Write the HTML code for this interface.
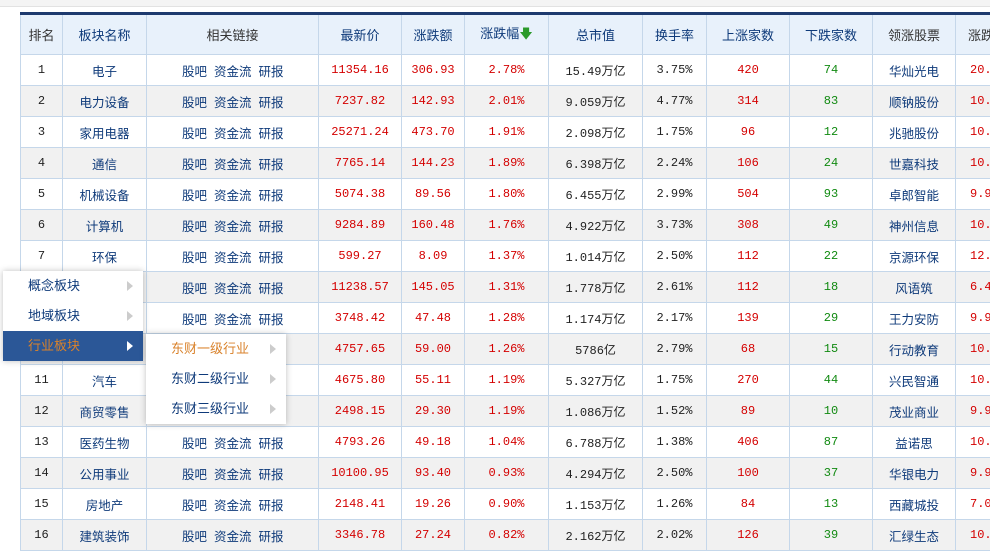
<!DOCTYPE html>
<html><head><meta charset="utf-8">
<style>
body{margin:0;width:990px;height:550px;overflow:hidden;background:#fff;font-family:"Liberation Sans","Noto Sans CJK SC",sans-serif;position:relative}
.top{position:absolute;left:0;top:0;width:990px;height:6px;background:#f4f4f4;border-bottom:1px solid #e2e2e2}
table{position:absolute;left:20px;top:12px;border-collapse:collapse;table-layout:fixed;width:1060px;border-top:3px solid #1d3a6e}
td,th{border:1px solid #c5d7ea;text-align:center;font-size:12.5px;padding:0;height:30px;white-space:nowrap;overflow:hidden}
th{height:39px;background:#e8f1fb;color:#0e3a7a;font-weight:normal;font-size:13px}
th.k{color:#333}
tr:nth-child(odd) td{background:#f1f1f1}
.n{font-family:"Liberation Mono","Noto Sans CJK SC",monospace;font-size:12px}
.r{color:#d40000}.g{color:#118a11}.b{color:#0e3a7a}.d{color:#222}
.lk{color:#0e3a7a;text-align:left;padding-left:35px}
.lk span{margin-right:7px}
.menu{position:absolute;background:#fff;box-shadow:0 0 6px rgba(0,0,0,.25);font-size:13px;color:#0e3a7a}
.menu div{height:30px;line-height:30px;padding-left:25px;position:relative}
.menu div:after{content:"";position:absolute;right:10px;top:10px;border-left:6px solid #ccc;border-top:5px solid transparent;border-bottom:5px solid transparent}
.menu .sel{background:#2b5797;color:#d9822b}
.menu .sel:after{border-left-color:#fff}
</style></head><body>
<div class="top"></div>
<table>
<colgroup><col style="width:42px"><col style="width:84px"><col style="width:172px"><col style="width:83px"><col style="width:63px"><col style="width:84px"><col style="width:94px"><col style="width:64px"><col style="width:83px"><col style="width:83px"><col style="width:83px"><col style="width:125px"></colgroup>
<tr><th class="k">排名</th><th>板块名称</th><th class="k">相关链接</th><th>最新价</th><th>涨跌额</th><th>涨跌幅<span style="color:#2a9a2a">&#129095;</span></th><th>总市值</th><th>换手率</th><th>上涨家数</th><th>下跌家数</th><th class="k">领涨股票</th><th class="k" style="text-align:left;padding-left:12px">涨跌幅</th></tr>
<tr><td class="n d">1</td><td class="b">电子</td><td class="lk"><span>股吧</span><span>资金流</span><span>研报</span></td><td class="n r">11354.16</td><td class="n r">306.93</td><td class="n r">2.78%</td><td class="n d">15.49万亿</td><td class="n d">3.75%</td><td class="n r">420</td><td class="n g">74</td><td class="b">华灿光电</td><td class="n r" style="text-align:left;padding-left:14px">20.02%</td></tr>
<tr><td class="n d">2</td><td class="b">电力设备</td><td class="lk"><span>股吧</span><span>资金流</span><span>研报</span></td><td class="n r">7237.82</td><td class="n r">142.93</td><td class="n r">2.01%</td><td class="n d">9.059万亿</td><td class="n d">4.77%</td><td class="n r">314</td><td class="n g">83</td><td class="b">顺钠股份</td><td class="n r" style="text-align:left;padding-left:14px">10.03%</td></tr>
<tr><td class="n d">3</td><td class="b">家用电器</td><td class="lk"><span>股吧</span><span>资金流</span><span>研报</span></td><td class="n r">25271.24</td><td class="n r">473.70</td><td class="n r">1.91%</td><td class="n d">2.098万亿</td><td class="n d">1.75%</td><td class="n r">96</td><td class="n g">12</td><td class="b">兆驰股份</td><td class="n r" style="text-align:left;padding-left:14px">10.02%</td></tr>
<tr><td class="n d">4</td><td class="b">通信</td><td class="lk"><span>股吧</span><span>资金流</span><span>研报</span></td><td class="n r">7765.14</td><td class="n r">144.23</td><td class="n r">1.89%</td><td class="n d">6.398万亿</td><td class="n d">2.24%</td><td class="n r">106</td><td class="n g">24</td><td class="b">世嘉科技</td><td class="n r" style="text-align:left;padding-left:14px">10.01%</td></tr>
<tr><td class="n d">5</td><td class="b">机械设备</td><td class="lk"><span>股吧</span><span>资金流</span><span>研报</span></td><td class="n r">5074.38</td><td class="n r">89.56</td><td class="n r">1.80%</td><td class="n d">6.455万亿</td><td class="n d">2.99%</td><td class="n r">504</td><td class="n g">93</td><td class="b">卓郎智能</td><td class="n r" style="text-align:left;padding-left:14px">9.96%</td></tr>
<tr><td class="n d">6</td><td class="b">计算机</td><td class="lk"><span>股吧</span><span>资金流</span><span>研报</span></td><td class="n r">9284.89</td><td class="n r">160.48</td><td class="n r">1.76%</td><td class="n d">4.922万亿</td><td class="n d">3.73%</td><td class="n r">308</td><td class="n g">49</td><td class="b">神州信息</td><td class="n r" style="text-align:left;padding-left:14px">10.01%</td></tr>
<tr><td class="n d">7</td><td class="b">环保</td><td class="lk"><span>股吧</span><span>资金流</span><span>研报</span></td><td class="n r">599.27</td><td class="n r">8.09</td><td class="n r">1.37%</td><td class="n d">1.014万亿</td><td class="n d">2.50%</td><td class="n r">112</td><td class="n g">22</td><td class="b">京源环保</td><td class="n r" style="text-align:left;padding-left:14px">12.31%</td></tr>
<tr><td class="n d">8</td><td class="b">传媒</td><td class="lk"><span>股吧</span><span>资金流</span><span>研报</span></td><td class="n r">11238.57</td><td class="n r">145.05</td><td class="n r">1.31%</td><td class="n d">1.778万亿</td><td class="n d">2.61%</td><td class="n r">112</td><td class="n g">18</td><td class="b">风语筑</td><td class="n r" style="text-align:left;padding-left:14px">6.46%</td></tr>
<tr><td class="n d">9</td><td class="b">国防军工</td><td class="lk"><span>股吧</span><span>资金流</span><span>研报</span></td><td class="n r">3748.42</td><td class="n r">47.48</td><td class="n r">1.28%</td><td class="n d">1.174万亿</td><td class="n d">2.17%</td><td class="n r">139</td><td class="n g">29</td><td class="b">王力安防</td><td class="n r" style="text-align:left;padding-left:14px">9.98%</td></tr>
<tr><td class="n d">10</td><td class="b">社会服务</td><td class="lk"><span>股吧</span><span>资金流</span><span>研报</span></td><td class="n r">4757.65</td><td class="n r">59.00</td><td class="n r">1.26%</td><td class="n d">5786亿</td><td class="n d">2.79%</td><td class="n r">68</td><td class="n g">15</td><td class="b">行动教育</td><td class="n r" style="text-align:left;padding-left:14px">10.00%</td></tr>
<tr><td class="n d">11</td><td class="b">汽车</td><td class="lk"><span>股吧</span><span>资金流</span><span>研报</span></td><td class="n r">4675.80</td><td class="n r">55.11</td><td class="n r">1.19%</td><td class="n d">5.327万亿</td><td class="n d">1.75%</td><td class="n r">270</td><td class="n g">44</td><td class="b">兴民智通</td><td class="n r" style="text-align:left;padding-left:14px">10.05%</td></tr>
<tr><td class="n d">12</td><td class="b">商贸零售</td><td class="lk"><span>股吧</span><span>资金流</span><span>研报</span></td><td class="n r">2498.15</td><td class="n r">29.30</td><td class="n r">1.19%</td><td class="n d">1.086万亿</td><td class="n d">1.52%</td><td class="n r">89</td><td class="n g">10</td><td class="b">茂业商业</td><td class="n r" style="text-align:left;padding-left:14px">9.95%</td></tr>
<tr><td class="n d">13</td><td class="b">医药生物</td><td class="lk"><span>股吧</span><span>资金流</span><span>研报</span></td><td class="n r">4793.26</td><td class="n r">49.18</td><td class="n r">1.04%</td><td class="n d">6.788万亿</td><td class="n d">1.38%</td><td class="n r">406</td><td class="n g">87</td><td class="b">益诺思</td><td class="n r" style="text-align:left;padding-left:14px">10.20%</td></tr>
<tr><td class="n d">14</td><td class="b">公用事业</td><td class="lk"><span>股吧</span><span>资金流</span><span>研报</span></td><td class="n r">10100.95</td><td class="n r">93.40</td><td class="n r">0.93%</td><td class="n d">4.294万亿</td><td class="n d">2.50%</td><td class="n r">100</td><td class="n g">37</td><td class="b">华银电力</td><td class="n r" style="text-align:left;padding-left:14px">9.94%</td></tr>
<tr><td class="n d">15</td><td class="b">房地产</td><td class="lk"><span>股吧</span><span>资金流</span><span>研报</span></td><td class="n r">2148.41</td><td class="n r">19.26</td><td class="n r">0.90%</td><td class="n d">1.153万亿</td><td class="n d">1.26%</td><td class="n r">84</td><td class="n g">13</td><td class="b">西藏城投</td><td class="n r" style="text-align:left;padding-left:14px">7.03%</td></tr>
<tr><td class="n d">16</td><td class="b">建筑装饰</td><td class="lk"><span>股吧</span><span>资金流</span><span>研报</span></td><td class="n r">3346.78</td><td class="n r">27.24</td><td class="n r">0.82%</td><td class="n d">2.162万亿</td><td class="n d">2.02%</td><td class="n r">126</td><td class="n g">39</td><td class="b">汇绿生态</td><td class="n r" style="text-align:left;padding-left:14px">10.03%</td></tr>
</table>
<div class="menu" style="left:3px;top:271px;width:140px">
<div>概念板块</div><div>地域板块</div><div class="sel">行业板块</div>
</div>
<div class="menu" style="left:146px;top:334px;width:140px">
<div style="color:#d9822b">东财一级行业</div><div>东财二级行业</div><div>东财三级行业</div>
</div>
</body></html>
